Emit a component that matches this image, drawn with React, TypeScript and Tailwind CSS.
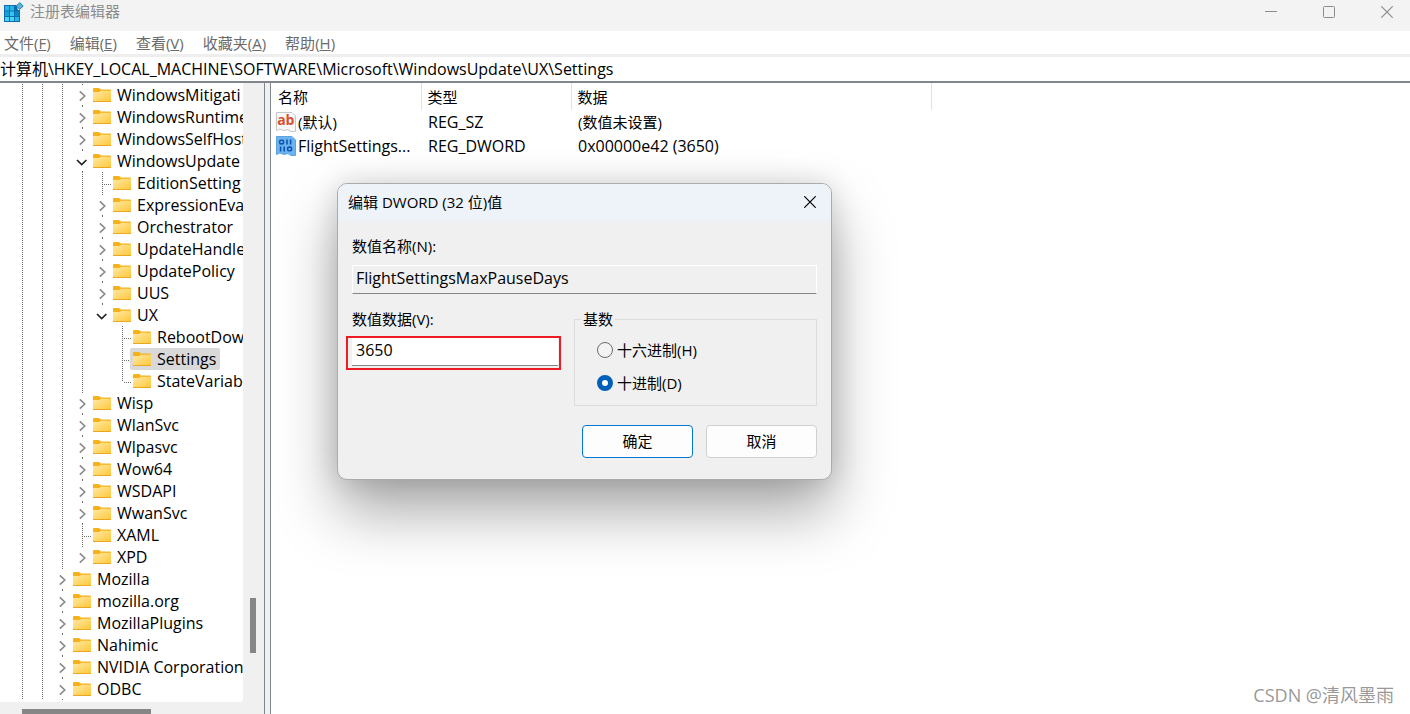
import { useState } from "react";

type Cell = "line" | "blank" | "open" | "openLast" | "closed" | "closedLast" | "branch" | "branchLast";

type TreeRow = {
  name: string;
  cells: Cell[];
  selected?: boolean;
};

const rootCells: Cell[] = ["line", "line"];
const softwareCells: Cell[] = [...rootCells, "line"];
const updateCells: Cell[] = [...softwareCells, "line"];
const uxCells: Cell[] = [...updateCells, "blank"];

const treeRows: TreeRow[] = [
  { name: "WindowsMitigati", cells: [...softwareCells, "closed"] },
  { name: "WindowsRuntime", cells: [...softwareCells, "closed"] },
  { name: "WindowsSelfHost", cells: [...softwareCells, "closed"] },
  { name: "WindowsUpdate", cells: [...softwareCells, "open"] },
  { name: "EditionSetting", cells: [...updateCells, "branch"] },
  { name: "ExpressionEval", cells: [...updateCells, "closed"] },
  { name: "Orchestrator", cells: [...updateCells, "closed"] },
  { name: "UpdateHandle", cells: [...updateCells, "closed"] },
  { name: "UpdatePolicy", cells: [...updateCells, "closed"] },
  { name: "UUS", cells: [...updateCells, "closed"] },
  { name: "UX", cells: [...updateCells, "openLast"] },
  { name: "RebootDow", cells: [...uxCells, "branch"] },
  { name: "Settings", cells: [...uxCells, "branch"], selected: true },
  { name: "StateVariab", cells: [...uxCells, "branchLast"] },
  { name: "Wisp", cells: [...softwareCells, "closed"] },
  { name: "WlanSvc", cells: [...softwareCells, "closed"] },
  { name: "Wlpasvc", cells: [...softwareCells, "closed"] },
  { name: "Wow64", cells: [...softwareCells, "closed"] },
  { name: "WSDAPI", cells: [...softwareCells, "closed"] },
  { name: "WwanSvc", cells: [...softwareCells, "closed"] },
  { name: "XAML", cells: [...softwareCells, "branch"] },
  { name: "XPD", cells: [...softwareCells, "closedLast"] },
  { name: "Mozilla", cells: [...rootCells, "closed"] },
  { name: "mozilla.org", cells: [...rootCells, "closed"] },
  { name: "MozillaPlugins", cells: [...rootCells, "closed"] },
  { name: "Nahimic", cells: [...rootCells, "closed"] },
  { name: "NVIDIA Corporation", cells: [...rootCells, "closed"] },
  { name: "ODBC", cells: [...rootCells, "closed"] },
];

const menuItems = [
  { label: "文件", accessKey: "F" },
  { label: "编辑", accessKey: "E" },
  { label: "查看", accessKey: "V" },
  { label: "收藏夹", accessKey: "A" },
  { label: "帮助", accessKey: "H" },
];

// One 20x22 cell of the tree gutter
function GutterCell({ kind }: { kind: Cell }) {
  const closed = kind === "closed" || kind === "closedLast";
  const open = kind === "open" || kind === "openLast";
  const dots = { stroke: "#6e6e6e", strokeWidth: 1, strokeDasharray: "1 1" };

  return (
    <svg width="20" height="22" viewBox="0 0 20 22" className="shrink-0" aria-hidden="true">
      {(kind === "line" || kind === "branch") && <path d="M10.5 0V22" {...dots} />}
      {kind === "branchLast" && <path d="M10.5 0V12" {...dots} />}
      {(kind === "branch" || kind === "branchLast") && <path d="M12 12.5H20" {...dots} />}
      {(closed || open) && <path d="M10.5 0V1" {...dots} />}
      {(kind === "closed" || kind === "open") && <path d="M10.5 21V22" {...dots} />}
      {closed && <path d="M7.8 7.3L12.8 12L7.8 16.7" fill="none" stroke="#8a8a8a" strokeWidth="1.6" />}
      {open && <path d="M5 10L9.7 14.5L14.4 10" fill="none" stroke="#222222" strokeWidth="1.7" />}
    </svg>
  );
}

function FolderIcon() {
  return (
    <svg width="18" height="14" viewBox="0 0 18 14" className="shrink-0" aria-hidden="true">
      <defs>
        <linearGradient id="folder" x1="0" y1="0" x2="1" y2="1">
          <stop offset="0" stopColor="#ffe9a6" />
          <stop offset="1" stopColor="#ffc83c" />
        </linearGradient>
      </defs>
      <path d="M0 1Q0 0 1 0H6L8 1.5H17Q18 1.5 18 2.5V5H0Z" fill="#f6b21b" />
      <path d="M0 4H6.5L8 2.7H18V13.2H0Z" fill="url(#folder)" />
      <path d="M0 13.5H18" stroke="#e9a820" strokeWidth="1" />
    </svg>
  );
}

function RegistryIcon() {
  return (
    <svg width="20" height="20" viewBox="0 0 20 20" aria-hidden="true">
      <path d="M0 3H11V8H16V20H0Z" fill="#0b6fae" />
      <path d="M11 3H12.5L14 8H11Z" fill="#0b6fae" />
      <path d="M1 4H5V8.5H1ZM6 4H10V8.5H6Z" fill="#27b5e8" />
      <path d="M1 9.5H5V14H1Z" fill="#16a0dc" />
      <path d="M6 9.5H10V14H6Z" fill="#35c6f0" />
      <path d="M11 9.5H15V14H11Z" fill="#0f86c4" />
      <path d="M1 15H5V19H1ZM6 15H10V19H6Z" fill="#4dd2f7" />
      <path d="M11 15H15V19H11Z" fill="#27b5e8" />
      <path d="M15.8 0.6L19.2 4L15.8 7.4L12.4 4Z" fill="#5fb2da" stroke="#1b7fb4" strokeWidth="1" />
    </svg>
  );
}

function StringValueIcon() {
  return (
    <svg width="20" height="20" viewBox="0 0 20 20" className="shrink-0" aria-hidden="true">
      <path d="M0.5 0.5H16L19.5 4V19.5H15L12 17.5L8 18.5L4 17L0.5 18.5Z" fill="#f8f8f8" stroke="#c4c6ca" />
      <text x="9.8" y="13" textAnchor="middle" fontSize="14" fontWeight="700" fill="#d9502e" fontFamily="Open Sans, sans-serif">
        ab
      </text>
    </svg>
  );
}

function BinaryValueIcon() {
  return (
    <svg width="20" height="20" viewBox="0 0 20 20" className="shrink-0" aria-hidden="true">
      <path d="M0.5 0.5H16L19.5 4V19.5H15L12 17.5L8 18.5L4 17L0.5 18.5Z" fill="#6db3ec" stroke="#5ba4e0" />
      <g fill="none" stroke="#0c55b5" strokeWidth="1.6">
        <rect x="3.6" y="4.3" width="4" height="3.6" rx="1.4" />
        <path d="M11 3.6V8.6M14.6 3.6V8.6M4.6 10.4V15.4M8.2 10.4V15.4" />
        <rect x="11.6" y="11.1" width="4" height="3.6" rx="1.4" />
      </g>
    </svg>
  );
}

function CloseIcon() {
  return (
    <svg width="12" height="12" viewBox="0 0 12 12" aria-hidden="true">
      <path d="M0.3 0.3L11.7 11.7M11.7 0.3L0.3 11.7" stroke="currentColor" strokeWidth="1.2" />
    </svg>
  );
}

function TitleBar() {
  return (
    <header className="flex h-[31px] items-start bg-[#f3f3f3] pl-1 pr-[17px] text-[#8c8c8c]">
      <div className="flex items-start gap-1.5 pt-0.5">
        <RegistryIcon />
        <h1 className="leading-[18px]">注册表编辑器</h1>
      </div>
      <div className="ml-auto flex items-center gap-[46px] pt-1.5">
        <button type="button" aria-label="最小化" className="flex size-3 items-center">
          <svg width="12" height="12" viewBox="0 0 12 12" aria-hidden="true">
            <path d="M0 5.5H12" stroke="currentColor" />
          </svg>
        </button>
        <button type="button" aria-label="最大化" className="flex size-3 items-center">
          <svg width="12" height="12" viewBox="0 0 12 12" aria-hidden="true">
            <rect x="0.5" y="0.5" width="11" height="11" rx="1" fill="none" stroke="currentColor" />
          </svg>
        </button>
        <button type="button" aria-label="关闭" className="flex size-3 items-center">
          <CloseIcon />
        </button>
      </div>
    </header>
  );
}

function KeyTree() {
  return (
    <aside className="flex w-[265px] shrink-0 flex-col border-r border-[#80868b] bg-[#f0f0f0]">
      <div className="flex grow">
        <ul className="w-[243px] overflow-hidden rounded-br bg-white pt-px">
          {treeRows.map((row) => (
            <li key={row.name} className="flex h-[22px] items-center pl-3 text-base leading-[22px]">
              {row.cells.map((cell, i) => (
                <GutterCell key={i} kind={cell} />
              ))}
              <button
                type="button"
                className={`flex h-[22px] shrink-0 items-center gap-1.5 whitespace-nowrap rounded-xs pr-1 ${
                  row.selected ? "-ml-0.5 bg-[#d9d9d9] pl-[3px]" : "pl-px"
                }`}
              >
                <FolderIcon />
                {row.name}
              </button>
            </li>
          ))}
        </ul>
        <div className="flex grow flex-col justify-end pb-[49px]">
          <div className="ml-[7px] h-[55px] w-1.5 bg-[#868686]" />
        </div>
      </div>
      <div className="h-3 shrink-0 overflow-hidden pl-[22px] pt-[7px]">
        <div className="h-1.5 w-[129px] bg-[#868686]" />
      </div>
    </aside>
  );
}

function ValueList() {
  return (
    <main className="grow border-l border-[#80868b] bg-white">
      <table className="table-fixed border-collapse text-left">
        <thead>
          <tr className="h-[27px]">
            <th className="w-[150px] border-r border-[#e2e2e2] pl-[7px] font-normal">名称</th>
            <th className="w-[150px] border-r border-[#e2e2e2] pl-1.5 font-normal">类型</th>
            <th className="w-[360px] border-r border-[#e2e2e2] pl-1.5 font-normal">数据</th>
          </tr>
        </thead>
        <tbody>
          <tr className="h-6">
            <td className="pl-[5px]">
              <div className="flex items-center gap-0.5">
                <StringValueIcon />
                (默认)
              </div>
            </td>
            <td className="pl-[7px] text-base leading-[22px]">REG_SZ</td>
            <td className="pl-[7px]">(数值未设置)</td>
          </tr>
          <tr className="h-6">
            <td className="pl-[5px]">
              <div className="flex items-center gap-0.5 text-base leading-[22px]">
                <BinaryValueIcon />
                FlightSettings...
              </div>
            </td>
            <td className="pl-[7px] text-base leading-[22px]">REG_DWORD</td>
            <td className="pl-[7px] text-base leading-[22px]">0x00000e42 (3650)</td>
          </tr>
        </tbody>
      </table>
    </main>
  );
}

const radioClass =
  "size-4 appearance-none rounded-full border border-[#6b6b6b] bg-[#f3f3f3] checked:border-5 checked:border-[#005fb8] checked:bg-white";

function EditDialog() {
  const [value, setValue] = useState("3650");
  const [base, setBase] = useState("dec");

  return (
    <section
      role="dialog"
      aria-labelledby="dialog-title"
      className="absolute left-[337px] top-[183px] w-[495px] overflow-hidden rounded-[10px] border border-[#a9abad] bg-[#f0f0f0] shadow-[0_32px_60px_rgba(0,0,0,0.34),0_0_28px_rgba(0,0,0,0.14)]"
    >
      <div className="flex h-[37px] items-center justify-between bg-[#eef3fa] pb-0.5 pl-2.5 pr-[15px]">
        <h2 id="dialog-title">编辑 DWORD (32 位)值</h2>
        <button type="button" aria-label="关闭">
          <CloseIcon />
        </button>
      </div>

      <form className="pb-[21px] pl-2 pr-3.5 pt-3.5" onSubmit={(e) => e.preventDefault()}>
        <div className="pl-1.5">
          <label htmlFor="value-name" className="block">
            数值名称(N):
          </label>
          <input
            id="value-name"
            readOnly
            value="FlightSettingsMaxPauseDays"
            className="mt-2 block h-[29px] w-full border border-white border-b-[#868686] bg-[#f0f0f0] pb-1 pl-[3px] text-base outline-none"
          />
        </div>

        <div className="mt-3.5 flex gap-[13px]">
          <div className="w-[215px]">
            <label htmlFor="value-data" className="block pl-1.5">
              数值数据(V):
            </label>
            <div className="mt-1.5 h-[34px] border-2 border-[#ed1c24] pb-0.5 pl-1 pr-px">
              <input
                id="value-data"
                value={value}
                onChange={(e) => setValue(e.target.value)}
                className="block h-full w-full border-b border-[#868686] bg-white pb-1 pl-1 text-base outline-none"
              />
            </div>
          </div>

          <fieldset className="grow border border-[#dcdcdc] pb-[11px] pl-[22px]">
            <legend className="-ml-4 px-0.5">基数</legend>
            <div className="flex flex-col gap-[11px] pt-[9px]">
              <label className="flex items-center gap-1">
                <input type="radio" name="base" className={radioClass} checked={base === "hex"} onChange={() => setBase("hex")} />
                十六进制(H)
              </label>
              <label className="flex items-center gap-1">
                <input type="radio" name="base" className={radioClass} checked={base === "dec"} onChange={() => setBase("dec")} />
                十进制(D)
              </label>
            </div>
          </fieldset>
        </div>

        <div className="mt-[19px] flex justify-end gap-[13px]">
          <button type="submit" className="h-[33px] w-[111px] rounded border border-[#0078d4] bg-[#fdfdfd] pb-0.5">
            确定
          </button>
          <button type="button" className="h-[33px] w-[111px] rounded border border-[#d0d0d0] bg-[#fdfdfd] pb-0.5">
            取消
          </button>
        </div>
      </form>
    </section>
  );
}

export default function App() {
  return (
    <div className="relative flex min-h-screen flex-col overflow-hidden bg-white font-['Open_Sans','Noto_Sans_CJK_SC',sans-serif] text-[15px] leading-[22px] text-black">
      <TitleBar />
      <nav className="flex h-[26px] items-center gap-[19px] border-b-3 border-[#eeeeee] pl-1 text-[#6b6b6b]">
        {menuItems.map((item) => (
          <button key={item.accessKey} type="button">
            {item.label}(<u>{item.accessKey}</u>)
          </button>
        ))}
      </nav>
      <div className="h-[26px] border-b-2 border-[#80868b]">
        <input
          aria-label="地址"
          defaultValue="计算机\HKEY_LOCAL_MACHINE\SOFTWARE\Microsoft\WindowsUpdate\UX\Settings"
          className="block h-6 w-full text-base outline-none"
        />
      </div>

      <div className="flex grow gap-[5px] bg-[#f0f0f0]">
        <KeyTree />
        <ValueList />
      </div>

      <EditDialog />

      <p className="absolute bottom-2 right-4 text-[18px] text-[#999999]">CSDN @清风墨雨</p>
    </div>
  );
}
